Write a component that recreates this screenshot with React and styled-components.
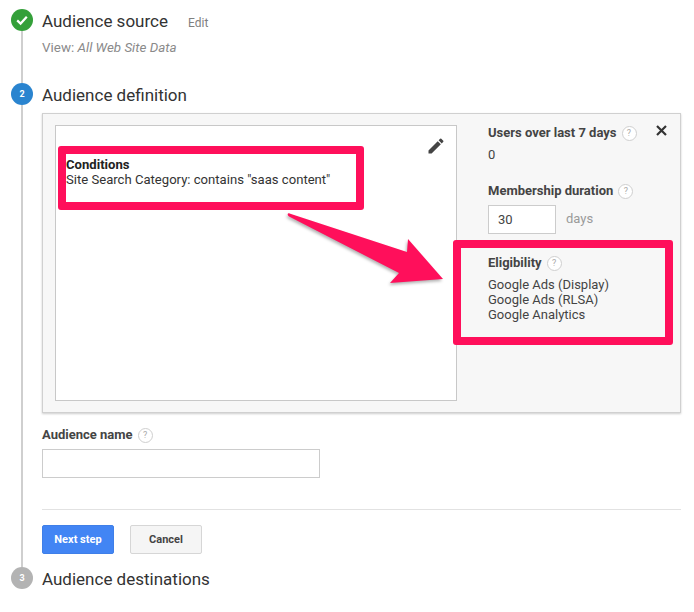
import React from "react";
import styled, { createGlobalStyle } from "styled-components";

const Global = createGlobalStyle`
  html, body { margin: 0; padding: 0; background: #fff; }
  body { font-family: Roboto, "Liberation Sans", sans-serif; color: #333; }
`;

const Page = styled.div`
  position: relative;
  width: 694px;
  height: 612px;
  overflow: hidden;
  padding: 9px 13px 0 11px;
  box-sizing: border-box;
`;

const Step = styled.section`
  display: flex;
  gap: 9px;
  min-height: ${(p) => p.$height}px;
`;

const Rail = styled.div`
  display: flex;
  flex-direction: column;
  align-items: center;
  width: 22px;
  flex: none;
`;

const Badge = styled.div`
  width: 22px;
  height: 22px;
  border-radius: 50%;
  flex: none;
  background: ${(p) => p.$color};
  color: #fff;
  display: flex;
  align-items: center;
  justify-content: center;
  font-size: 9px;
  font-weight: 700;
`;

const Connector = styled.div`
  width: 1.5px;
  flex: 1;
  background: #cfcfcf;
`;

const Body = styled.div`
  flex: 1;
  min-width: 0;
`;

const TitleRow = styled.div`
  display: flex;
  align-items: baseline;
  gap: 20px;
  height: 22px;
  line-height: 24px;
`;

const Title = styled.h2`
  margin: 0;
  font-size: 17px;
  font-weight: 400;
  color: #333;
`;

const EditLink = styled.span`
  font-size: 12px;
  color: #808080;
`;

const ViewLine = styled.div`
  margin-top: 9px;
  font-size: 13.4px;
  line-height: 16px;
  color: #8a8a8a;
  em { font-style: italic; }
`;

const Panel = styled.div`
  position: relative;
  margin-top: 8px;
  height: 300px;
  box-sizing: border-box;
  background: #f7f7f7;
  border: 1px solid #d0d0d0;
  box-shadow: 0 1px 2px rgba(0, 0, 0, 0.2);
  display: flex;
  padding: 11px 0 11px 12px;
`;

const Canvas = styled.div`
  position: relative;
  width: 402px;
  flex: none;
  box-sizing: border-box;
  background: #fff;
  border: 1px solid #c8c8c8;
  padding: 31px 10px;
  font-size: 13.1px;
  line-height: 15px;
  color: #333;
  strong { display: block; font-weight: 700; color: #222; }
`;

const Pencil = styled.svg`
  position: absolute;
  top: 10px;
  right: 10px;
  width: 20px;
  height: 20px;
  fill: #444;
`;

const Side = styled.div`
  flex: 1;
  padding: 0 0 0 31px;
  position: relative;
`;

const Label = styled.div`
  display: flex;
  align-items: center;
  gap: 5px;
  font-size: 13px;
  font-weight: 700;
  line-height: 16px;
  margin-top: ${(p) => p.$top || 0}px;
  color: #444;
`;

const Help = styled.span`
  width: 13px;
  height: 13px;
  border: 1px solid #cfcfcf;
  border-radius: 50%;
  background: #fff;
  color: #aaa;
  font-size: 9px;
  font-weight: 400;
  display: inline-flex;
  align-items: center;
  justify-content: center;
  flex: none;
`;

const Close = styled.svg`
  position: absolute;
  top: 0;
  right: 13px;
  width: 11px;
  height: 11px;
  stroke: #333;
  stroke-width: 2.2;
`;

const Value = styled.div`
  font-size: 13px;
  line-height: 15px;
  color: #444;
  margin-top: ${(p) => p.$top || 0}px;
`;

const DurationRow = styled.div`
  display: flex;
  align-items: center;
  gap: 10px;
  margin-top: 6px;
`;

const SmallInput = styled.div`
  width: 68px;
  height: 29px;
  box-sizing: border-box;
  border: 1px solid #ccc;
  background: #fff;
  font-size: 13px;
  line-height: 27px;
  padding-left: 9px;
  color: #444;
`;

const Unit = styled.span`
  font-size: 13px;
  color: #9a9a9a;
  margin-top: -3px;
`;

const NameBlock = styled.div`
  margin-top: 14px;
`;

const NameInput = styled.div`
  margin-top: 6px;
  width: 278px;
  height: 29px;
  box-sizing: border-box;
  border: 1px solid #ccc;
  background: #fff;
`;

const Divider = styled.div`
  margin-top: 31px;
  height: 1px;
  background: #e2e2e2;
`;

const Buttons = styled.div`
  display: flex;
  gap: 16px;
  margin-top: 15px;
`;

const Button = styled.div`
  width: 72px;
  height: 29px;
  box-sizing: border-box;
  border-radius: 2px;
  border: 1px solid ${(p) => (p.$primary ? "#3f7fe8" : "#d6d6d6")};
  background: ${(p) => (p.$primary ? "#4285f4" : "#f5f5f5")};
  color: ${(p) => (p.$primary ? "#fff" : "#444")};
  font-size: 11px;
  font-weight: 700;
  display: flex;
  align-items: center;
  justify-content: center;
`;

const Callout = styled.div`
  position: absolute;
  left: ${(p) => p.$x}px;
  top: ${(p) => p.$y}px;
  width: ${(p) => p.$w}px;
  height: ${(p) => p.$h}px;
  box-sizing: border-box;
  border: 8px solid #ff0f5b;
  border-radius: 3px;
`;

const Arrow = styled.svg`
  position: absolute;
  left: 0;
  top: 0;
  width: 694px;
  height: 612px;
  pointer-events: none;
  filter: drop-shadow(-1px 2px 1.5px rgba(0, 0, 0, 0.3));
`;

export default function App() {
  return (
    <Page>
      <Global />
      <Step $height={74}>
        <Rail>
          <Badge $color="#34a03a">
            <svg width="14" height="14" viewBox="0 0 14 14" fill="none" stroke="#fff" strokeWidth="2.2">
              <path d="M2.2 7.4 5.6 10.6 11.8 3.8" />
            </svg>
          </Badge>
          <Connector />
        </Rail>
        <Body>
          <TitleRow>
            <Title>Audience source</Title>
            <EditLink>Edit</EditLink>
          </TitleRow>
          <ViewLine>
            View: <em>All Web Site Data</em>
          </ViewLine>
        </Body>
      </Step>
      <Step $height={484}>
        <Rail>
          <Badge $color="#2a84cf">2</Badge>
          <Connector />
        </Rail>
        <Body>
          <TitleRow>
            <Title>Audience definition</Title>
          </TitleRow>
          <Panel>
            <Canvas>
              <Pencil viewBox="0 0 24 24">
                <path d="M3 17.25V21h3.75L17.81 9.94l-3.75-3.75L3 17.25zM20.71 7.04a1 1 0 0 0 0-1.41l-2.34-2.34a1 1 0 0 0-1.41 0l-1.83 1.83 3.75 3.75 1.83-1.83z" />
              </Pencil>
              <strong>Conditions</strong>
              Site Search Category: contains "saas content"
            </Canvas>
            <Side>
              <Close viewBox="0 0 11 11">
                <path d="M1 1 10 10M10 1 1 10" />
              </Close>
              <Label>
                Users over last 7 days <Help>?</Help>
              </Label>
              <Value $top={6}>0</Value>
              <Label $top={21}>
                Membership duration <Help>?</Help>
              </Label>
              <DurationRow>
                <SmallInput>30</SmallInput>
                <Unit>days</Unit>
              </DurationRow>
              <Label $top={21}>
                Eligibility <Help>?</Help>
              </Label>
              <Value $top={6}>
                Google Ads (Display)
                <br />
                Google Ads (RLSA)
                <br />
                Google Analytics
              </Value>
            </Side>
          </Panel>
          <NameBlock>
            <Label>
              Audience name <Help>?</Help>
            </Label>
            <NameInput />
          </NameBlock>
          <Divider />
          <Buttons>
            <Button $primary>Next step</Button>
            <Button>Cancel</Button>
          </Buttons>
        </Body>
      </Step>
      <Step $height={22}>
        <Rail>
          <Badge $color="#b3b3b3">3</Badge>
        </Rail>
        <Body>
          <TitleRow>
            <Title>Audience destinations</Title>
          </TitleRow>
        </Body>
      </Step>
      <Callout $x={58} $y={146} $w={306} $h={64} />
      <Callout $x={453} $y={240} $w={220} $h={105} />
      <Arrow viewBox="0 0 694 612">
        <path d="M288 213.5 Q289 213 291 214 L407 252 L408 239 L443 279 L390 283 L399 273 L289 216.5 Q287 215 288 213.5Z" fill="#ff0f5b" />
      </Arrow>
    </Page>
  );
}
